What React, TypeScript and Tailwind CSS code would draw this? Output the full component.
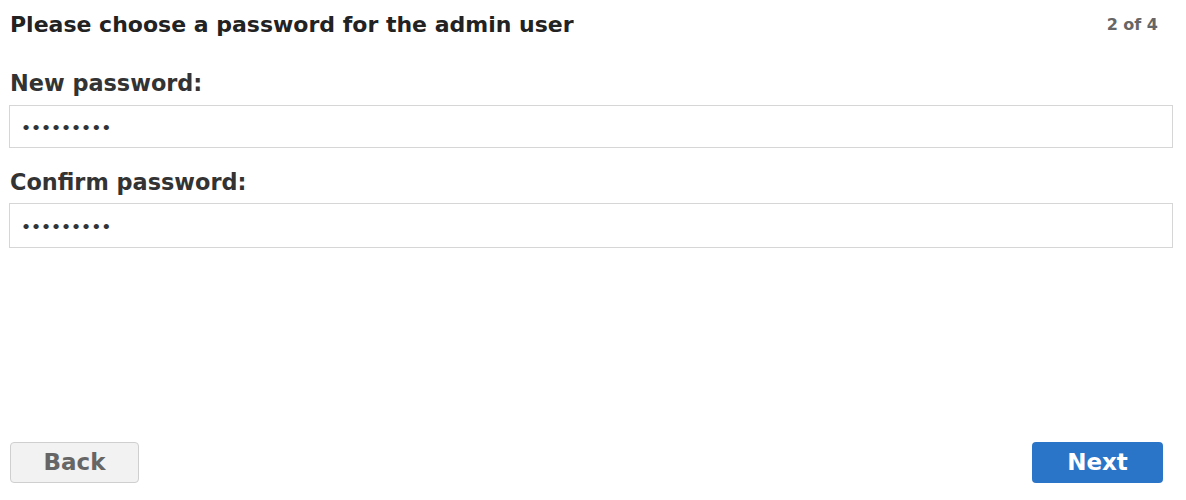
export default function App() {
  return (
    <div className="flex h-[500px] w-[1186px] flex-col bg-white px-[9px] font-['DejaVu_Sans',sans-serif]">
      <div className="flex items-center justify-between pt-[11px]">
        <h1 className="pl-px text-[22px] font-bold leading-[28px] text-[#222]">
          Please choose a password for the admin user
        </h1>
        <span className="pr-[19px] text-[16px] font-bold leading-[28px] text-[#666]">2 of 4</span>
      </div>

      <div className="mr-[4px] mt-[32px] flex flex-col">
        <label className="pl-px text-[22.4px] font-bold leading-[25px] text-[#333]">New password:</label>
        <input
          type="password"
          defaultValue="123456789"
          className="mt-[9px] h-[43px] border border-[#d6d6d6] px-[12px] font-['Lato',sans-serif] text-[14px] tracking-[1.9px] text-[#333] outline-none"
        />
        <label className="mt-[22px] pl-px text-[22.4px] font-bold leading-[25px] text-[#333]">
          Confirm password:
        </label>
        <input
          type="password"
          defaultValue="123456789"
          className="mt-[8px] h-[45px] border border-[#d6d6d6] px-[12px] font-['Lato',sans-serif] text-[14px] tracking-[1.9px] text-[#333] outline-none"
        />
      </div>

      <div className="mt-auto flex items-center justify-between pb-[17px] pr-[14px]">
        <button
          type="button"
          className="ml-px h-[41px] w-[129px] rounded-[4px] border border-[#cfcfcf] bg-[#f2f2f2] text-[23px] font-bold text-[#666]"
        >
          Back
        </button>
        <button
          type="button"
          className="h-[41px] w-[131px] rounded-[4px] bg-[#2a75c8] text-[23px] font-bold text-white"
        >
          Next
        </button>
      </div>
    </div>
  );
}
